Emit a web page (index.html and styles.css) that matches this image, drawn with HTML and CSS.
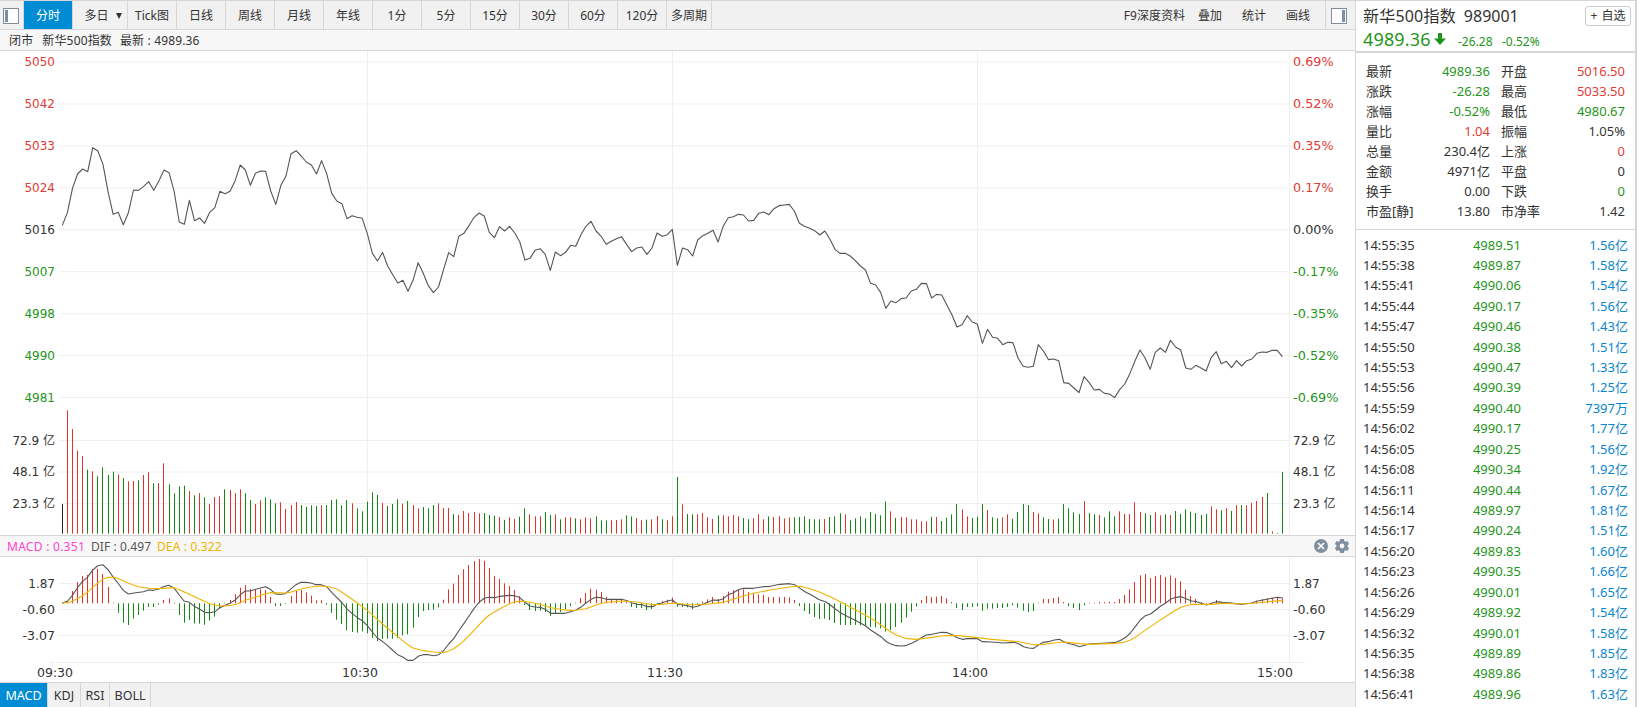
FILE: index.html
```html
<!DOCTYPE html>
<html lang="zh-CN">
<head>
<meta charset="utf-8">
<title>新华500指数 989001</title>
<link rel="stylesheet" href="styles.css">
</head>
<body>
<div class="app">
  <main class="main">
    <nav class="toolbar">
      <button class="tool tool-side"><svg width="16" height="16" viewBox="0 0 16 16"><rect x=".5" y=".5" width="15" height="15" fill="#fff" stroke="#7f8fa0"/><rect x="2" y="2" width="3" height="12" fill="#7f8fa0"/></svg></button>
      <button class="tool active">分时</button>
      <button class="tool tool-days">多日<span class="caret"></span></button>
      <button class="tool">Tick图</button>
      <button class="tool">日线</button>
      <button class="tool">周线</button>
      <button class="tool">月线</button>
      <button class="tool">年线</button>
      <button class="tool">1分</button>
      <button class="tool">5分</button>
      <button class="tool">15分</button>
      <button class="tool">30分</button>
      <button class="tool">60分</button>
      <button class="tool">120分</button>
      <button class="tool tool-multi">多周期</button>
      <div class="links"><a>F9深度资料</a><a>叠加</a><a>统计</a><a>画线</a></div>
      <button class="tool tool-right"><svg width="16" height="16" viewBox="0 0 16 16"><rect x=".5" y=".5" width="15" height="15" fill="#fff" stroke="#7f8fa0"/><rect x="11" y="2" width="3" height="12" fill="#7f8fa0"/></svg></button>
    </nav>
    <div class="status"><span>闭市</span><span>新华500指数</span><span>最新 : 4989.36</span></div>
    <svg class="chart" id="price" width="1355" height="484" viewBox="0 51 1355 484"></svg>
    <div class="indicator">
      <span class="macd">MACD : 0.351</span><span class="dif">DIF : 0.497</span><span class="dea">DEA : 0.322</span>
      <div class="indicator-actions">
        <svg width="14" height="14" viewBox="0 0 14 14"><circle cx="7" cy="7" r="7" fill="#7f8fa0"/><path d="M4 4l6 6M10 4l-6 6" stroke="#fff" stroke-width="1.7"/></svg>
        <svg width="14" height="14" viewBox="0 0 14 14"><path fill="#7f8fa0" fill-rule="evenodd" d="M5.2 0h3.6l.5 2 1.3.7 2-.6L14 5l-1.500 1.500v1L14 9l-1.400 2.900-2-.6-1.300.7-.5 2H5.200l-.5-2-1.300-.7-2 .6L0 9l1.500-1.500v-1L0 5l1.400-2.900 2 .6L4.700 2zM7 4.600a2.400 2.400 0 1 0 0 4.800 2.400 2.400 0 0 0 0-4.800z"/></svg>
      </div>
    </div>
    <svg class="chart" id="macd" width="1355" height="125" viewBox="0 557 1355 125"></svg>
    <nav class="tabs"><button class="active">MACD</button><button>KDJ</button><button>RSI</button><button>BOLL</button></nav>
  </main>
  <aside class="side">
    <header class="quote">
      <div class="title"><span>新华500指数</span><span>989001</span><button class="add"><span>+</span>自选</button></div>
      <div class="last"><strong>4989.36</strong><svg width="12" height="12" viewBox="0 0 12 12"><path fill="#1f9520" d="M4 0h4v5.500h4L6 12 0 5.500h4z"/></svg><span>-26.28</span><span>-0.52%</span></div>
    </header>
    <dl class="stats">
      <dt>最新</dt><dd class="down">4989.36</dd><dt>开盘</dt><dd class="up">5016.50</dd>
      <dt>涨跌</dt><dd class="down">-26.28</dd><dt>最高</dt><dd class="up">5033.50</dd>
      <dt>涨幅</dt><dd class="down">-0.52%</dd><dt>最低</dt><dd class="down">4980.67</dd>
      <dt>量比</dt><dd class="up">1.04</dd><dt>振幅</dt><dd>1.05%</dd>
      <dt>总量</dt><dd>230.4亿</dd><dt>上涨</dt><dd class="up">0</dd>
      <dt>金额</dt><dd>4971亿</dd><dt>平盘</dt><dd>0</dd>
      <dt>换手</dt><dd>0.00</dd><dt>下跌</dt><dd class="down">0</dd>
      <dt>市盈[静]</dt><dd>13.80</dd><dt>市净率</dt><dd>1.42</dd>
    </dl>
    <div class="ticks" id="ticks"></div>
  </aside>
</div>
<script src="chart.js"></script>
</body>
</html>
```
FILE: styles.css
```css
* { box-sizing: border-box; }
body { margin: 0; background: #fff; color: #333; font: 12px/16px "Noto Sans", "Noto Sans CJK SC", sans-serif; }
button { margin: 0; padding: 0; border: 0; background: none; color: inherit; font: inherit; }
.app { display: flex; width: 1637px; height: 707px; overflow: hidden; border-top: 1px solid #d6d6d6; }
.main { width: 1355px; flex: none; display: flex; flex-direction: column; }
.toolbar { display: flex; height: 29px; flex: none; background: #f1f1f1; border-bottom: 1px solid #d6d6d6; }
.tool { width: 49px; border-right: 1px solid #d6d6d6; display: flex; align-items: center; justify-content: center; padding-top: 1px; white-space: nowrap; }
.tool.active { background: #008cd4; color: #fff; }
.tool-side { width: 24px; padding: 1px 2px 0 0; }
.tool-days { width: 55px; padding-left: 6px; gap: 7px; }
.caret { border: 3px solid transparent; border-top: 6px solid #333; border-bottom: 0; }
.tool-multi { width: 45px; }
.links { flex: 1; display: flex; justify-content: flex-end; align-items: center; padding: 1px 15px 0 0; }
.links a + a { margin-left: 20px; }
.links a:nth-child(2) { margin-left: 13px; }
.tool-right { width: 30px; padding-right: 3px; border-right: 0; border-left: 1px solid #d6d6d6; }
.status { display: flex; align-items: center; gap: 9px; height: 21px; flex: none; padding: 2px 0 0 9px; letter-spacing: .15px; background: #f7f7f7; border-bottom: 1px solid #d6d6d6; }
.status span:nth-child(3) { margin-left: -1px; }
.chart { display: block; flex: none; }
.indicator { display: flex; align-items: center; height: 22px; flex: none; padding: 0 6px 0 7px; gap: 6px; background: #f7f7f7; border: solid #d6d6d6; border-width: 1px 0; }
.indicator span { padding-top: 2px; }
.macd { color: #ff42d0; letter-spacing: .27px; }
.dif { color: #555; letter-spacing: .08px; }
.dea { color: #f0b400; letter-spacing: .12px; }
.indicator-actions { display: flex; gap: 7px; margin-left: auto; }
.tabs { display: flex; flex: 1; background: #f1f1f1; border-top: 1px solid #d6d6d6; }
.tabs button { width: 48px; padding: 1px 0 0; border-right: 1px solid #d6d6d6; font-size: 12.5px; text-align: center; }
.tabs button:nth-child(2) { width: 33px; }
.tabs button:nth-child(3) { width: 29px; }
.tabs button:nth-child(4) { width: 41px; }
.tabs .active { background: #008cd4; color: #fff; }
.side { flex: 1; border-left: 1px solid #d6d6d6; border-right: 2px solid #d6d6d6; font-size: 13px; }
.quote { height: 52px; border-bottom: 2px solid #d6d6d6; padding: 5px 4px 0 7px; }
.title { display: flex; align-items: center; height: 20px; font-size: 16px; gap: 8px; }
.title span:first-child { letter-spacing: .2px; }
.add { margin-left: auto; width: 46px; height: 20px; border: 1px solid #ccc; border-radius: 3px; font-size: 12px; line-height: 16px; display: flex; justify-content: center; align-items: center; gap: 4px; }
.title .add span { letter-spacing: 0; }
.last { display: flex; align-items: center; height: 26px; color: #1f9520; font-size: 12px; }
.last strong { font-weight: 400; font-size: 18px; line-height: 24px; width: 71px; letter-spacing: .15px; }
.last svg { margin-right: 12px; }
.last span { width: 44px; padding-top: 5px; }
.stats { margin: 0; height: 177px; padding: 8px 9px 0 10px; display: grid; grid-template-columns: 50px 74px 59px 76px; grid-auto-rows: 20px; line-height: 20px; border-bottom: 1px solid #d6d6d6; white-space: nowrap; }
.stats dt:nth-of-type(even) { padding-left: 11px; }
.stats dd { margin: 0; text-align: right; }
.up { color: #e23b35; }
.down { color: #1f9520; }
.ticks { padding: 4.5px 7px 0 7px; }
.tick { display: grid; grid-template-columns: 60px 98px 1fr; height: 20.43px; line-height: 20.43px; }
.tick .down, .amount { text-align: right; }
.amount { color: #0a85cf; }
.grid { stroke: #efefef; stroke-width: 1; fill: none; }
.line { fill: none; stroke: #555; stroke-width: 1.1; stroke-linejoin: round; }
.line-dea { stroke: #f0b400; }
.axis { font: 12px "DejaVu Sans", "Noto Sans CJK SC", sans-serif; fill: #333; }
.axis.up { fill: #e23b35; }
.axis.down { fill: #1f9520; }
.bar-r { fill: #de342c; }
.bar-g { fill: #128812; }
.bar-k { fill: #222; }
```
FILE: chart.js
```js
const NS = 'http://www.w3.org/2000/svg';
const X0 = 62.3, STEP = 5.0835;
const nums = s => s.trim().split(/\s+/).map(Number);

function add(svg, tag, attrs, text) {
  const el = document.createElementNS(NS, tag);
  for (const k in attrs) el.setAttribute(k, attrs[k]);
  if (text !== undefined) el.textContent = text;
  svg.appendChild(el);
}
const gridLine = (svg, x1, y1, x2, y2) => add(svg, 'line', { class: 'grid', x1, y1, x2, y2 });
const label = (svg, x, y, text, cls, anchor, extra) =>
  add(svg, 'text', { class: 'axis ' + cls, x, y: y + 4.4, 'text-anchor': anchor, ...extra }, text);
const bar = (svg, i, from, to, color) =>
  add(svg, 'rect', { class: 'bar-' + color, x: Math.floor(X0 + STEP * i), width: 1, y: Math.min(from, to), height: Math.max(.6, Math.abs(from - to)) });

const price = document.getElementById('price');
const macd = document.getElementById('macd');

/* grid and axes */
const left = ['5050', '5042', '5033', '5024', '5016', '5007', '4998', '4990', '4981'];
const right = ['0.69%', '0.52%', '0.35%', '0.17%', '0.00%', '-0.17%', '-0.35%', '-0.52%', '-0.69%'];
left.forEach((t, i) => {
  const y = 62 + 41.94 * i, cls = i < 4 ? 'up' : i > 4 ? 'down' : '';
  gridLine(price, 59, y, 1289, y);
  label(price, 55, y, t, cls, 'end');
  label(price, 1293, y, right[i], cls, 'start', { textLength: i > 4 ? 45.5 : 40.5, lengthAdjust: 'spacingAndGlyphs' });
});
[['72.9 亿', 440.5], ['48.1 亿', 472], ['23.3 亿', 503.6]].forEach(([t, y]) => {
  gridLine(price, 59, y, 1289, y);
  label(price, 55, y, t, '', 'end');
  label(price, 1293, y, t, '', 'start');
});
[['1.87', 583.5], ['-0.60', 609.4], ['-3.07', 635.6]].forEach(([t, y]) => {
  gridLine(macd, 59, y, 1289, y);
  const extra = t[0] === '-' ? { textLength: 32.5, lengthAdjust: 'spacingAndGlyphs' } : {};
  label(macd, 55, y, t, '', 'end', extra);
  label(macd, 1293, y, t, '', 'start', extra);
});
[367.5, 672.5, 977.5, 1289.5].forEach(x => {
  gridLine(price, x, 51, x, 535);
  gridLine(macd, x, 558, x, 662);
});
gridLine(macd, 49, 662.5, 1305, 662.5);
['09:30', '10:30', '11:30', '14:00', '15:00'].forEach((t, i) => {
  const x = 52.5 + 305 * i;
  gridLine(macd, x, 662, x, 667);
  label(macd, x + 2.5, 672.6, t, '', 'middle', { textLength: 36, lengthAdjust: 'spacingAndGlyphs' });
});

/* price curve, thirds of a pixel from three bands of the plot */
const bandA = nums(`286 248 175 132 117 125 53 63 103 185 253 247 284 248 180 181 169 155 181 153 120 128 184 276 283 211 272 264 280 247
 233 184 191 184 152 105 120 166 130 123 124 183 223 166 138 71 62 78 96 105 132 92 131 190 213 221 266 257 262 265
 311 370 393 367 408 434 459 451 484 451 398 430 467 488 471`).map(v => v / 3 + 130);
const bandB = nums(`269 218 230 169 160 137 112 99 108 157 173 140 153 139 159 186 240 235 211 206 223 271 216 227 217 196 199 165 139 124
 153 169 193 184 176 170 193 215 204 201 223 204 159 169 164 148 256 204 209 228 180 167 160 151 186 139 113 110 103 105
 123 121 100 96 104 86 77 75 73 93 130 139 145 152 165 153 178 208 220 220 228 242 258`).map(v => v / 3 + 180);
const bandC = nums(`240 280 285 308 355 333 338 326 324 303 298 280 281 324 313 315 345 374 411 404 377 396 402 460 418 442 445 464 457 458
 504 529 532 529 464 483 509 507 512 578 580 594 608 560 578 600 598 610 612 623 599 582 551 513 480 504 538 487 474 487
 451 471 480 534 538 526 534 543 503 485 521 514 533 512 528 512 507 490 486 487 481 481 500`).map(v => v / 3 + 190);
const curve = [...bandA, ...bandB, ...bandC];

/* volume: colour letter followed by the height of the bar's top */
const volA = `k852 r571 r627 r692 r708 g749 r754 g769 g742 g765 g755 r763 g774 r784 r783 g781 r765 r757 g790 r789 r730 g793 g820 g799 g797
 r813 g826 r819 g832 r852 r831 r829 g808 r810 r820 r808 g820 g840 r852 r841 g832 g838 g850 r847 r867 r855 r846 g855 g861 g856
 g858 r856 g855 g840 g838 g856 g840 r850 g865 g874 g845 g817 g825 r849 g858 g852 g838 r851 g843 r855 r865 g861 g865 g855 r850`;
const volB = `r144 r144 g162 r165 r153 r159 r156 r160 g159 g165 g167 r171 g180 r172 r177 g170 g145 r163 r169 r169 g156 g165 r163 g178 r172
 r172 g175 r178 r172 r175 g169 g181 g181 r181 r180 r178 g166 g169 r174 r181 g179 r178 r168 g178 r181 r169 g51 r133 g162 g163
 r163 r159 r172 r177 g166 r166 r169 r165 r169 g174 g178 r175 r163 r178 g169 r171 r169 r175 r172 g172 g171 g169 g177 g178 g178
 r177 g171 g169 g160 r163 g181 g175 g169 g175 g156 g162 g166 g124 r154 g174 r171 r172 r178 r178 r184 r184 g170 r171 g183 g173
 g163 g132 r148 r169 g174 g170 g132 r150 g172 g175 r172 r163 g176 g156 g132 g135 r156 r160 g172 g177 r179 g176 g132 g145 g157
 g162 r123 g159 g163 r165 g172 g154 g169 r154 r162 r162 r127 r156 g160 g165 r157 r166 g163 r165 g153 g162 g148 g155 g159 g165
 g162 r139 r148 g151 r145 g153 r135 g135 r136 r129 r123 r111 g99 r214 g219 g36`;
const drawVolume = (s, start, offset) => s.trim().split(/\s+/).forEach((v, i) =>
  bar(price, start + i, 533.7, +v.slice(1) / 3 + offset, v[0]));
drawVolume(volA, 0, 220);
drawVolume(volB, 75, 460);
add(price, 'polyline', { class: 'line', points: curve.map((y, i) => (X0 + STEP * i).toFixed(2) + ',' + y.toFixed(2)).join(' ') });

/* MACD histogram */
nums(`249 243 213 186 168 165 147 146 162 201 248 278 308 315 296 285 272 261 261 254 240 235 249 285 308 300 310 311 314 302
 290 265 248 240 223 203 195 207 210 208 210 231 258 258 251 228 213 210 217 227 241 241 254 278 299 312 331 336 338 334
 340 354 364 357 356 356 354 346 343 323 291 273 270 269 262 239 208 191 165 148 135 123 117 122 144 168 177 190 198 210
 229 255 270 273 272 276 288 280 276 267 258 248 234 219 206 209 216 230 240 240 240 245 261 264 264 270 267 254 243 239
 233 260 261 262 268 255 245 238 231 237 228 215 210 209 208 216 220 224 225 231 231 231 231 232 240 258 273 282 291 297
 296 300 309 315 315 315 315 316 319 321 322 325 335 330 321 308 293 275 259 240 228 231 230 228 235 246 264 270 261 261
 259 272 266 266 264 264 261 256 263 272 276 273 248 237 237 234 231 246 258 264 270 256 248 248 246 246 245 246 237 225
 208 186 166 162 174 168 165 171 166 174 184 209 228 237 246 255 248 240 245 247 248 250 250 250 248 242 237 235 234 234 235`)
  .forEach((v, i) => bar(macd, i, 603.3, v / 3 + 520, v <= 249 ? 'r' : 'g'));

/* indicator lines: x,y pairs in thirds of a pixel, grouped by the x of the group */
function drawLine(groups, cls) {
  const pts = [];
  groups.forEach(([x0, s]) => {
    const n = nums(s);
    for (let i = 0; i < n.length; i += 2) pts.push(((n[i] + x0) / 3).toFixed(2) + ',' + (n[i + 1] / 3 + 520).toFixed(2));
  });
  add(macd, 'polyline', { class: 'line ' + cls, points: pts.join(' ') });
}
drawLine([
  [0, `187 249 203 243 217 226 232 204 247 185 262 172 277 152 292 138 308 134 325 150 340 172 356 192 370 211 385 222 402 219
   430 215 446 210 460 211 475 208 490 200 506 196 521 203 538 225 552 243 568 247 583 259 598 267 614 277 630 278 645 275
   660 263 675 256 690 250 707 239 722 223 736 213 752 213 767 208 796 200 811 208 827 222 842 223 856 221 871 208 888 194
   903 187 918 187 933 189 948 194 963 194 980 200 995 217 1010 232 1027 249 1042 268 1057 281 1072 293 1087 302 1102 317
   1117 336 1132 354 1147 364 1162 376 1177 390 1193 404`],
  [1200, `8 411 23 421 39 421 56 408 70 404 85 404 101 407 116 404 130 393 146 372 161 356 176 333 192 310 207 288 222 266 238 246
   254 234 268 232 284 233 300 229 328 226 343 227 358 232 374 246 390 258 404 261 420 262 436 268 452 280 470 280 495 280
   512 275 528 270 542 262 558 249 573 238 588 232 604 233 619 238 665 238 682 242 697 249 712 253 727 254 742 260 758 260
   772 252 787 248 802 243 817 240 832 252 862 257 878 262 893 259 910 252 925 246 940 240 956 241 970 236 985 224 1000 218
   1015 209 1030 205 1060 205 1090 200 1110 199 1140 193 1168 191 1184 194 1200 205 1215 215 1230 223 1258 239`],
  [2460, `16 245 31 255 46 267 61 278 90 293 120 308 137 318 152 330 183 350 200 366 213 372 228 377 245 378 260 376 275 370
   290 362 304 353 319 345 335 343 365 337 382 338 397 344 412 353 427 358 442 356 472 356 487 365 515 366 550 369 582 367
   597 372 611 380 626 384 641 385 655 375 670 367 685 365 703 360 718 358 733 366 748 371 763 374 779 380 793 376 808 372
   885 368 902 361 917 352 931 339 946 320 961 300 976 287 992 282 1007 270 1022 258 1037 249 1053 237 1068 232 1083 230
   1098 236 1115 243 1130 245 1160 255 1175 250 1190 245 1205 247`],
  [3660, `20 248 40 250 68 253 95 249 110 244 125 241 140 238 160 234 172 232 188 234`]
], '');
drawLine([
  [0, `187 249 203 248 217 243 232 236 247 227 262 217 277 203 292 190 308 178 325 172 343 172 356 176 385 190 415 200 445 205
   480 206 521 203 538 209 568 223 598 237 630 251 645 255 660 258 685 257 710 253 736 241 767 231 796 221 811 218 856 219
   871 217 903 207 933 201 965 198 990 201 1012 208 1042 228 1072 249 1102 271 1132 298 1162 324 1193 350`],
  [1200, `23 374 39 384 70 392 100 396 130 398 146 393 161 386 176 376 192 362 207 347 222 331 238 314 254 297 268 285 300 266
   328 251 343 246 358 244 374 244 420 253 452 263 480 268 510 271 528 271 558 266 588 255 619 247 665 243 710 246 758 254
   787 253 817 249 878 255 925 252 970 247 1000 238 1030 228 1060 220 1110 210 1184 199 1200 199 1230 206 1258 216`],
  [2460, `31 230 61 245 90 261 150 293 200 327 213 336 228 344 245 351 262 356 290 358 335 352 365 348 390 346 415 347 472 353
   515 358 550 361 597 365 641 374 670 373 700 369 733 366 779 371 808 373 885 370 902 368 917 365 931 360 946 352 961 341
   1022 299 1068 270 1083 262 1098 257 1115 253 1175 253 1205 250`],
  [3660, `20 250 68 252 110 249 188 241`]
], 'line-dea');

/* latest trades, one every three seconds */
const trades = `4989.51 1.56亿 4989.87 1.58亿 4990.06 1.54亿 4990.17 1.56亿 4990.46 1.43亿 4990.38 1.51亿 4990.47 1.33亿 4990.39 1.25亿
 4990.40 7397万 4990.17 1.77亿 4990.25 1.56亿 4990.34 1.92亿 4990.44 1.67亿 4989.97 1.81亿 4990.24 1.51亿 4989.83 1.60亿
 4990.35 1.66亿 4990.01 1.65亿 4989.92 1.54亿 4990.01 1.58亿 4989.89 1.85亿 4989.86 1.83亿 4989.96 1.63亿`.trim().split(/\s+/);
let rows = '';
for (let i = 0; i < trades.length / 2; i++) {
  const s = 35 + 3 * i;
  const t = '14:' + (55 + Math.floor(s / 60)) + ':' + String(s % 60).padStart(2, '0');
  rows += `<div class="tick"><span>${t}</span><span class="down">${trades[2 * i]}</span><span class="amount">${trades[2 * i + 1]}</span></div>`;
}
document.getElementById('ticks').innerHTML = rows;
```
